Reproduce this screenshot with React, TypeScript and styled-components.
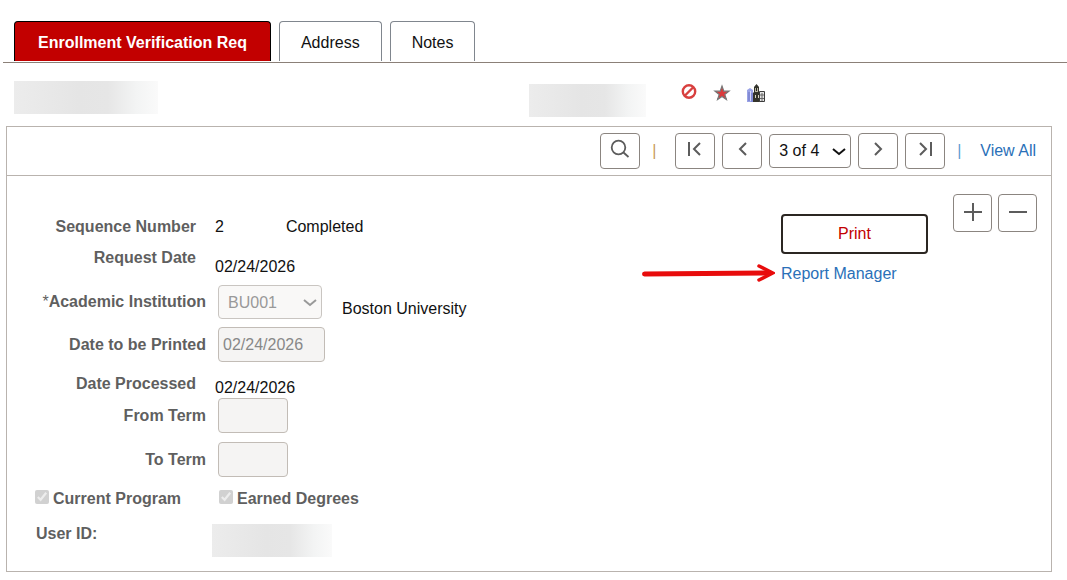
import React from "react";
import styled, { createGlobalStyle } from "styled-components";

const GlobalStyle = createGlobalStyle`
  * { box-sizing: border-box; }
  body { margin: 0; background: #fff; }
  body, button, input, select { font-family: "Liberation Sans", Arial, sans-serif; font-size: 16px; color: #111; }
`;

const Page = styled.main`
  padding: 21px 0 8px;
  line-height: 20px;
`;

const TabBar = styled.nav`
  display: flex;
  gap: 8px;
  margin-left: 3px;
  padding: 0 11px 1px;
  border-bottom: 1px solid #8b8078;
`;

const Tab = styled.button<{ $active?: boolean }>`
  height: 40px;
  padding: 2px ${(p) => (p.$active ? 23 : 21)}px 0;
  border: 1px solid ${(p) => (p.$active ? "#000" : "#80868e")};
  border-bottom: 0;
  border-radius: 4px 4px 0 0;
  background: ${(p) => (p.$active ? "#c20000" : "#fff")};
  color: ${(p) => (p.$active ? "#fff" : "#111")};
  font-weight: ${(p) => (p.$active ? 700 : 400)};
`;

const StudentBar = styled.header`
  display: flex;
  align-items: flex-start;
  height: 63px;
  padding: 18px 14px 0;
`;

const Redacted = styled.span<{ $width: number }>`
  width: ${(p) => p.$width}px;
  height: 33px;
  background: linear-gradient(90deg, #ececec, #e5e5e5 45%, #e6e6e6 65%, #f3f4f4 85%, #fafafa);
`;

const StudentId = styled.div`
  display: flex;
  margin-left: 371px;
  padding-top: 3px;
`;

const StatusIcons = styled.div`
  display: flex;
  align-items: center;
  gap: 15px;
  margin-left: 34px;
  height: 24px;
`;

const Panel = styled.section`
  margin: 0 15px 0 6px;
  border: 1px solid #b9b3ae;
`;

const Toolbar = styled.div`
  display: flex;
  align-items: center;
  justify-content: flex-end;
  gap: 7px;
  height: 49px;
  padding: 0 15px 1px 0;
  border-bottom: 1px solid #b9b3ae;
`;

const IconButton = styled.button`
  display: flex;
  align-items: center;
  justify-content: center;
  width: 40px;
  height: 36px;
  padding: 0 0 3px;
  border: 1px solid #8b8580;
  border-radius: 4px;
  background: #fff;
  color: #5c5c5c;
`;

const SquareButton = styled(IconButton)`
  width: 39px;
  height: 38px;
`;

const Divider = styled.span<{ $color: string }>`
  width: 21px;
  padding-left: 5px;
  color: ${(p) => p.$color};
`;

const SelectBox = styled.span<{ $width: number }>`
  display: grid;
  grid-template-columns: 1fr;
  align-items: center;
  width: ${(p) => p.$width}px;

  & > * { grid-area: 1 / 1; }
  & > svg { justify-self: end; margin-right: 5px; pointer-events: none; }
`;

const Select = styled.select`
  appearance: none;
  width: 100%;
  height: 34px;
  padding: 0 9px;
  border: 1px solid #8b8580;
  border-radius: 4px;
  background: #fff;
  opacity: 1;

  &:disabled { border-color: #c9c5c1; background: #f9f8f7; color: #999; }
`;

const Link = styled.a`
  color: #2a70b8;
  text-decoration: none;
`;

const Body = styled.div`
  display: flex;
  align-items: flex-start;
  min-height: 395px;
  padding-right: 14px;
`;

const Form = styled.form`
  flex: 1;
  padding-top: 34px;
`;

const Row = styled.div<{ $height: number; $top?: number; $align?: string }>`
  display: grid;
  grid-template-columns: 199px auto 1fr;
  align-items: ${(p) => p.$align || "center"};
  height: ${(p) => p.$height}px;
  margin-top: ${(p) => p.$top || 0}px;
`;

const Label = styled.label<{ $inset?: boolean; $self?: string }>`
  align-self: ${(p) => p.$self || "center"};
  padding-right: ${(p) => (p.$inset ? 10 : 0)}px;
  color: #5f5f5f;
  font-weight: 700;
  line-height: 28px;
  text-align: right;
`;

const Required = styled.span`
  font-weight: 400;
`;

const Value = styled.output`
  margin-left: 9px;
`;

const Status = styled.span`
  margin-left: 62px;
`;

const Institution = styled.span`
  align-self: end;
  margin-left: 20px;
`;

const Field = styled.div`
  display: flex;
  margin-left: 12px;
`;

const Input = styled.input<{ $width: number }>`
  width: ${(p) => p.$width}px;
  height: 35px;
  padding: 0 4px;
  border: 1px solid #c2bcb6;
  border-radius: 4px;
  background: #f5f4f3;
  color: #888;
`;

const Checks = styled.div`
  display: grid;
  grid-template-columns: 184px auto;
  justify-content: start;
  align-items: center;
  height: 42px;
  padding: 2px 0 0 28px;
`;

const CheckLabel = styled.label`
  display: flex;
  align-items: center;
  gap: 4px;
  color: #5f5f5f;
  font-weight: 700;

  input { width: 14px; height: 14px; margin: 0 0 4px; }
`;

const UserRow = styled.div`
  display: grid;
  grid-template-columns: 176px auto;
  justify-content: start;
  padding: 5px 0 0 29px;
  color: #5f5f5f;
  font-weight: 700;
`;

const Actions = styled.div`
  display: grid;
  grid-template-columns: 134px 147px;
  column-gap: 6px;
  padding-top: 38px;
  margin-right: 25px;
`;

const PrintButton = styled.button`
  grid-column: 2;
  height: 40px;
  border: 2px solid #2b2622;
  border-radius: 4px;
  background: #fff;
  color: #c20000;
`;

const Arrow = styled.svg`
  grid-column: 1;
  margin-top: 9px;
`;

const ReportLink = styled(Link)`
  margin-top: 10px;
`;

const RowButtons = styled.div`
  display: flex;
  gap: 6px;
  padding-top: 18px;
`;

const Glyph = ({ d, size = 20, width = 2, color = "currentColor" }: { d: string; size?: number; width?: number; color?: string }) => (
  <svg width={size} height={size} viewBox={`0 0 ${size} ${size}`} fill="none" stroke={color} strokeWidth={width} aria-hidden="true">
    <path d={d} />
  </svg>
);

export default function App() {
  return (
    <>
      <GlobalStyle />
      <Page>
        <TabBar>
          <Tab $active>Enrollment Verification Req</Tab>
          <Tab>Address</Tab>
          <Tab>Notes</Tab>
        </TabBar>

        <StudentBar>
          <Redacted $width={144} />
          <StudentId><Redacted $width={117} /></StudentId>
          <StatusIcons>
            <svg width="18" height="18" viewBox="0 0 18 18" fill="none" stroke="#d8403f" strokeWidth="2.4">
              <circle cx="9" cy="7.5" r="6.2" />
              <path d="M5 11.500 13 3.500" />
            </svg>
            <svg width="18" height="18" viewBox="0 0 18 18">
              <path d="M9 2 10.8 7.2H16L11.800 10.400 13.400 15.400 9 12.400 4.600 15.400 6.200 10.400 2 7.200H7.200Z" fill="#d93a3c" stroke="#777" strokeWidth="1.2" />
            </svg>
            <svg width="20" height="18" viewBox="0 0 20 18">
              <path d="M1 8V6l3-2 3 2v12H1z" fill="#9aa3e6" />
              <path d="M3 8v9M6 9v9" stroke="#6a73c4" />
              <path d="M4.500 7v10" stroke="#d4d8fb" />
              <path d="M7 18V9l1-1V3l2.500-3L13 3v5l1 1v9z" fill="#34342c" />
              <path d="M9 4h3v4H9z" fill="#b9b6a0" />
              <path d="M10 4h1v3h-1z" fill="#222" />
              <path d="M9 11h1v3H9zM12 11h1v3h-1z" fill="#d9d6c0" />
              <path d="M13.500 7.500h5v10h-5z" fill="#e4e4e4" stroke="#3c3c3c" />
              <path d="M16 9v8M14 11h4M14 14.500h4" stroke="#666" />
            </svg>
          </StatusIcons>
        </StudentBar>

        <Panel>
          <Toolbar>
            <IconButton aria-label="Find">
              <svg width="20" height="20" viewBox="0 0 20 20" fill="none" stroke="currentColor" strokeWidth="1.8">
                <circle cx="8.5" cy="8.5" r="6.8" /><path d="m13.5 13.5 5 4.5" />
              </svg>
            </IconButton>
            <Divider $color="#c99a5c">|</Divider>
            <IconButton aria-label="First row"><Glyph d="M4 3v14M15 4 9 10l6 6" /></IconButton>
            <IconButton aria-label="Previous row"><Glyph d="M14 4 8 10l6 6" /></IconButton>
            <SelectBox $width={82}>
              <Select aria-label="Row"><option>3 of 4</option></Select>
              <Glyph d="M1 5l6 5 6-5" size={14} color="#111" />
            </SelectBox>
            <IconButton aria-label="Next row"><Glyph d="m7 4 6 6-6 6" /></IconButton>
            <IconButton aria-label="Last row"><Glyph d="m5 4 6 6-6 6M16 3v14" /></IconButton>
            <Divider $color="#5b9bd0">|</Divider>
            <Link href="#all">View All</Link>
          </Toolbar>

          <Body>
            <Form>
              <Row $height={34}>
                <Label $inset htmlFor="seq">Sequence Number</Label>
                <Value id="seq">2</Value>
                <Status>Completed</Status>
              </Row>
              <Row $height={33} $align="end">
                <Label $inset $self="start" htmlFor="requested">Request Date</Label>
                <Value id="requested">02/24/2026</Value>
              </Row>
              <Row $height={33} $top={8}>
                <Label htmlFor="institution"><Required>*</Required>Academic Institution</Label>
                <Field>
                  <SelectBox $width={104}>
                    <Select id="institution" disabled><option>BU001</option></Select>
                    <Glyph d="M1 5l6 5 6-5" size={14} color="#999" />
                  </SelectBox>
                </Field>
                <Institution>Boston University</Institution>
              </Row>
              <Row $height={35} $top={9}>
                <Label htmlFor="printed">Date to be Printed</Label>
                <Field><Input id="printed" $width={107} defaultValue="02/24/2026" disabled /></Field>
              </Row>
              <Row $height={36} $align="end">
                <Label $inset $self="end" htmlFor="processed">Date Processed</Label>
                <Value id="processed">02/24/2026</Value>
              </Row>
              <Row $height={35}>
                <Label htmlFor="from">From Term</Label>
                <Field><Input id="from" $width={70} disabled /></Field>
              </Row>
              <Row $height={35} $top={9}>
                <Label htmlFor="to">To Term</Label>
                <Field><Input id="to" $width={70} disabled /></Field>
              </Row>
              <Checks>
                <CheckLabel><input type="checkbox" defaultChecked disabled />Current Program</CheckLabel>
                <CheckLabel><input type="checkbox" defaultChecked disabled />Earned Degrees</CheckLabel>
              </Checks>
              <UserRow>User ID:<Redacted $width={120} /></UserRow>
            </Form>

            <Actions>
              <PrintButton type="button">Print</PrintButton>
              <Arrow width="134" height="20" viewBox="0 0 134 20" fill="none" stroke="#e80c0c" strokeLinecap="round" aria-hidden="true">
                <path d="M3.500 11 128 10" strokeWidth="5" />
                <path d="M118 3 131.500 10 118 17" strokeWidth="3.500" />
              </Arrow>
              <ReportLink href="#reports">Report Manager</ReportLink>
            </Actions>
            <RowButtons>
              <SquareButton aria-label="Add a row"><Glyph d="M10 1v18M1 10h18" /></SquareButton>
              <SquareButton aria-label="Delete row"><Glyph d="M1 10h18" /></SquareButton>
            </RowButtons>
          </Body>
        </Panel>
      </Page>
    </>
  );
}
